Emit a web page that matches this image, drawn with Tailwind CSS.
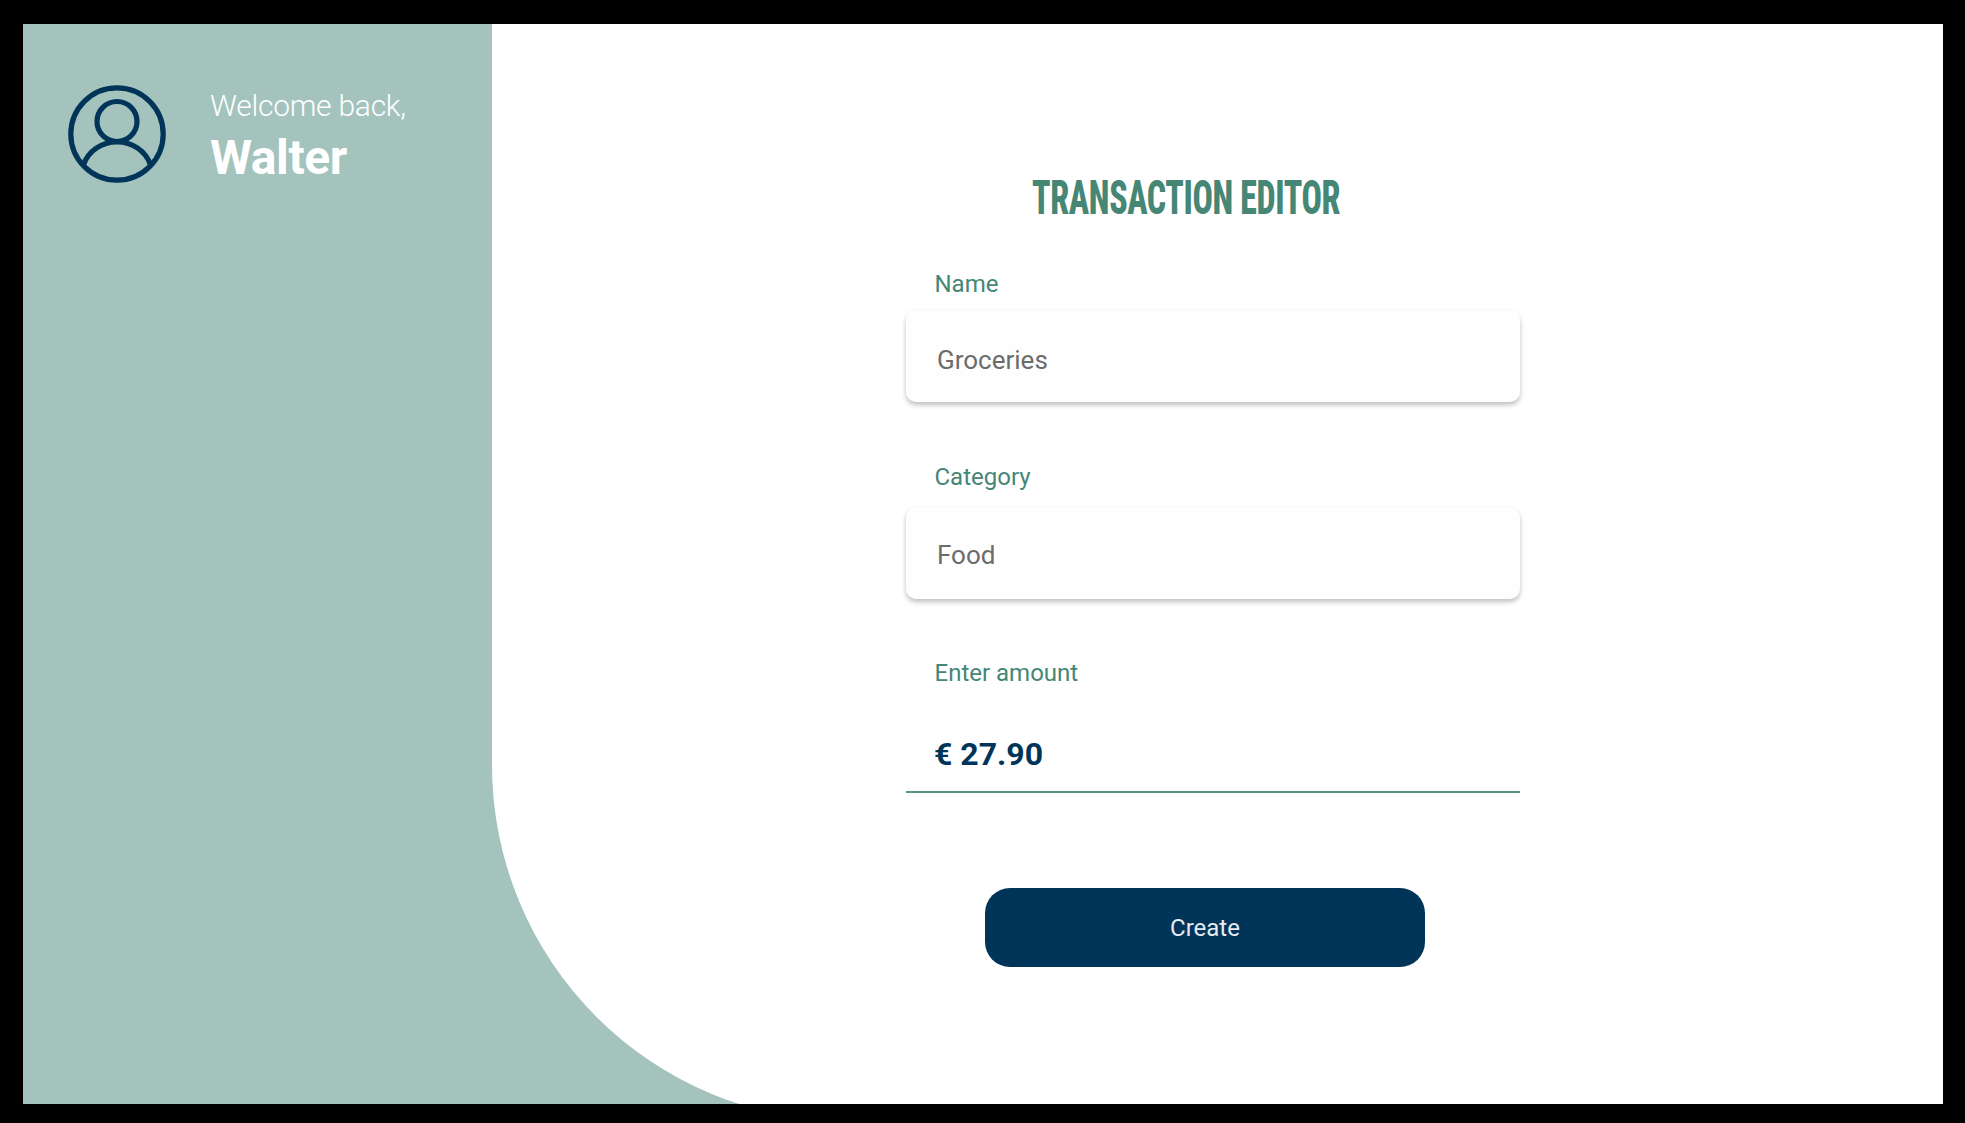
<!DOCTYPE html>
<html lang="en">
<head>
<meta charset="utf-8">
<title>Transaction Editor</title>
<script src="https://cdn.jsdelivr.net/npm/@tailwindcss/browser@4"></script>
</head>
<body class="h-[1123px] overflow-hidden bg-black pt-6 pl-[23px] font-[Roboto,sans-serif]">
<div class="flex h-[1080px] w-[1920px] overflow-hidden bg-[#a4c3bc]">
  <aside class="flex w-[469px] shrink-0 items-start gap-[44px] pt-[61px] pl-[45px]">
    <svg class="size-[98px] shrink-0" viewBox="0 0 98 98" fill="none" stroke="#003459" stroke-width="5.2">
      <circle cx="49" cy="49" r="46.2"/>
      <circle cx="49" cy="36.5" r="20"/>
      <path d="M15.5 80C20 66 34 56.800 49 56.800S78 66 82.500 80"/>
    </svg>
    <div class="whitespace-nowrap text-white">
      <p class="mt-[3px] text-[30px] leading-[36px] font-light tracking-[-0.25px]">Welcome back,</p>
      <p class="mt-[6px] text-5xl leading-[56px] font-bold tracking-[-0.4px]">Walter</p>
    </div>
  </aside>
  <main class="h-[1097px] grow rounded-bl-[356px] bg-white pt-[143px] pl-[414px]">
    <form class="flex w-[614px] flex-col">
      <h1 class="mt-px ml-[126px] w-max origin-left scale-x-[0.705] text-5xl leading-[60px] font-extrabold tracking-[-0.5px] font-stretch-condensed whitespace-nowrap text-[#458675]">TRANSACTION EDITOR</h1>
      <label class="mt-[41px] ml-[28.500px] text-2xl leading-[30px] text-[#458675]">Name</label>
      <div class="mt-[11px] flex h-[92px] items-center rounded-[10px] bg-[#fefefe] pt-2 pl-[31px] text-[26px] text-[#6c6c6c] shadow-[0_3px_5px_rgba(0,0,0,0.25)]">Groceries</div>
      <label class="mt-[60px] ml-[28.500px] text-2xl leading-[30px] text-[#458675]">Category</label>
      <div class="mt-[15px] flex h-[92px] items-center rounded-[10px] bg-[#fefefe] pt-1 pl-[31px] text-[26px] text-[#6c6c6c] shadow-[0_3px_5px_rgba(0,0,0,0.25)]">Food</div>
      <label class="mt-[59px] ml-[28.500px] text-2xl leading-[30px] text-[#458675]">Enter amount</label>
      <div class="mt-[47px] flex h-[58px] border-b-2 border-[#5b9182] pl-7 text-[32px] leading-[38px] font-bold text-[#003459]">€ 27.90</div>
      <button type="button" class="mt-[95px] ml-[79px] h-[79px] w-[440px] rounded-[25px] bg-[#003459] text-2xl text-[#e6ebef]">Create</button>
    </form>
  </main>
</div>
</body>
</html>
